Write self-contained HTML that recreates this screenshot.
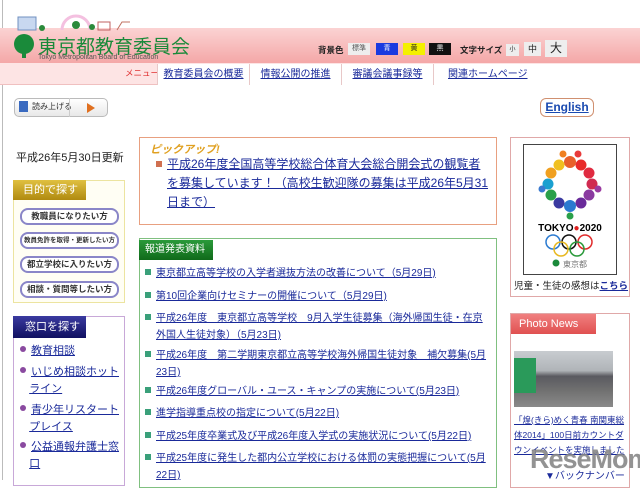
<!DOCTYPE html>
<html><head><meta charset="utf-8"><style>
*{margin:0;padding:0;box-sizing:border-box}
body{width:640px;height:480px;overflow:hidden;background:#fff;font-family:"Liberation Sans","Noto Sans CJK JP",sans-serif;position:relative;color:#222}
.a{position:absolute}
a{color:#1a2a9a;text-decoration:underline}
.band{left:0;top:28px;width:640px;height:36px;background:linear-gradient(#fbd3d3,#f4a6a6)}
.nav{left:0;top:63px;width:640px;height:22px;background:#fde4e4;border-bottom:1px solid #f0c0c0}
.tab{top:64px;height:21px;background:#fff;border-left:1px solid #e8c8c8;font-size:10px;text-align:center;line-height:21px}
.btn{background:#fff;border:2px solid #8a86c8;border-radius:8px;font-size:8.5px;text-align:center;height:17px;line-height:13px;font-weight:bold;color:#333;left:20px;width:99px}
.item{font-size:10px;left:145px;width:345px;line-height:17px;padding-left:11px;text-indent:-11px}
.item i{display:inline-block;width:6px;height:6px;background:#3aa07a;margin-right:5px;vertical-align:1px;text-indent:0}
.side{font-size:11px;left:20px;line-height:17px;width:100px}
.side i{display:inline-block;width:6px;height:6px;border-radius:3px;background:#8a4aa0;margin-right:5px;vertical-align:2px}
</style></head><body>
<div class="a" style="left:2px;top:0;width:1px;height:480px;background:#bbb"></div>
<div class="a band"></div>
<svg class="a" style="left:12px;top:10px" width="150" height="22"><rect x="6" y="7" width="18" height="13" fill="#c8d8f0" stroke="#7090c0"/><circle cx="30" cy="18" r="3" fill="#2a8a3a"/><path d="M50 20 A14 14 0 0 1 78 20" fill="none" stroke="#f4c0e0" stroke-width="3"/><circle cx="64" cy="15" r="4" fill="#2a8a3a"/><circle cx="80" cy="17" r="3" fill="#2a8a3a"/><rect x="86" y="12" width="12" height="8" fill="none" stroke="#c06060"/><path d="M105 20 L110 12 L118 12" fill="none" stroke="#c07060"/></svg>
<svg class="a" style="left:12px;top:34px" width="24" height="24"><circle cx="12" cy="10" r="10" fill="#1a8a3a"/><rect x="10" y="14" width="4" height="10" fill="#1a8a3a"/></svg>
<div class="a" style="left:38px;top:32px;font-size:19px;color:#1a8a3a;white-space:nowrap">東京都教育委員会</div>
<div class="a" style="left:38px;top:54px;font-size:7px;color:#555;white-space:nowrap">Tokyo Metropolitan Board of Education</div>
<div class="a" style="left:318px;top:44px;font-size:8.5px;font-weight:bold;white-space:nowrap">背景色</div>
<div class="a" style="left:348px;top:43px;width:22px;height:12px;background:#eee;font-size:7px;text-align:center;line-height:12px;color:#555">標準</div>
<div class="a" style="left:376px;top:43px;width:22px;height:12px;background:#1a3ae0;font-size:7px;text-align:center;line-height:12px;color:#fff">青</div>
<div class="a" style="left:403px;top:43px;width:22px;height:12px;background:#f4f000;font-size:7px;text-align:center;line-height:12px">黄</div>
<div class="a" style="left:429px;top:43px;width:22px;height:12px;background:#111;font-size:7px;text-align:center;line-height:12px;color:#fff">黒</div>
<div class="a" style="left:460px;top:44px;font-size:8.5px;font-weight:bold;white-space:nowrap">文字サイズ</div>
<div class="a" style="left:506px;top:44px;width:13px;height:12px;background:#eee;font-size:6px;text-align:center;line-height:12px">小</div>
<div class="a" style="left:524px;top:42px;width:17px;height:14px;background:#eee;font-size:9px;text-align:center;line-height:14px">中</div>
<div class="a" style="left:545px;top:40px;width:22px;height:17px;background:#eee;font-size:12px;text-align:center;line-height:17px">大</div>
<div class="a nav"></div>
<div class="a" style="left:125px;top:67px;font-size:8.5px;color:#e03030">メニュー</div>
<div class="a tab" style="left:157px;width:92px"><a>教育委員会の概要</a></div>
<div class="a tab" style="left:249px;width:92px"><a>情報公開の推進</a></div>
<div class="a tab" style="left:341px;width:92px"><a>審議会議事録等</a></div>
<div class="a tab" style="left:433px;width:207px;text-align:left;padding-left:14px"><a>関連ホームページ</a></div>
<div class="a" style="left:14px;top:98px;width:94px;height:19px;border:1px solid #bbb;border-radius:5px;background:linear-gradient(#fff,#e8e8e8)"></div>
<div class="a" style="left:19px;top:101px;width:9px;height:11px;background:#3a6ac0"></div>
<div class="a" style="left:32px;top:101px;font-size:8px;color:#333">読み上げる</div>
<div class="a" style="left:69px;top:98px;width:1px;height:19px;background:#ccc"></div>
<div class="a" style="left:87px;top:103px;border-left:8px solid #e07020;border-top:5px solid transparent;border-bottom:5px solid transparent"></div>
<div class="a" style="left:540px;top:98px;width:54px;height:19px;border:1.5px solid #d09070;border-radius:6px;font-size:12px;font-weight:bold;text-align:center;line-height:16px"><a style="color:#1a4ab0">English</a></div>
<div class="a" style="left:16px;top:149px;font-size:11px">平成26年5月30日更新</div>
<div class="a" style="left:13px;top:180px;width:112px;height:123px;border:1px solid #ece4a0;background:#fffef4"></div>
<div class="a" style="left:13px;top:180px;width:73px;height:20px;background:linear-gradient(#e0c040,#b08a10);color:#fff;font-size:11px;line-height:20px;padding-left:10px">目的で探す</div>
<div class="a btn" style="top:208px">教職員になりたい方</div>
<div class="a btn" style="top:232px;font-size:6.5px">教員免許を取得・更新したい方</div>
<div class="a btn" style="top:256px">都立学校に入りたい方</div>
<div class="a btn" style="top:281px">相談・質問等したい方</div>
<div class="a" style="left:13px;top:316px;width:112px;height:170px;border:1px solid #c8a8d8"></div>
<div class="a" style="left:13px;top:316px;width:73px;height:22px;background:linear-gradient(#3a3aa0,#101060);color:#fff;font-size:11px;line-height:22px;padding-left:12px">窓口を探す</div>
<div class="a side" style="top:343px"><i></i><a>教育相談</a></div>
<div class="a side" style="top:364px"><i></i><a>いじめ相談ホット</a><br>&nbsp;&nbsp;&nbsp;<a>ライン</a></div>
<div class="a side" style="top:402px"><i></i><a>青少年リスタート</a><br>&nbsp;&nbsp;&nbsp;<a>プレイス</a></div>
<div class="a side" style="top:439px"><i></i><a>公益通報弁護士窓</a><br>&nbsp;&nbsp;&nbsp;<a>口</a></div>
<div class="a" style="left:139px;top:137px;width:358px;height:88px;border:1px solid #e8a080"></div>
<div class="a" style="left:150px;top:141px;font-size:11px;font-weight:bold;font-style:italic;color:#e0a020">ピックアップ!</div>
<div class="a" style="left:156px;top:161px;width:6px;height:6px;background:#d07050"></div>
<div class="a" style="left:167px;top:155px;width:325px;font-size:12px;line-height:19px"><a>平成26年度全国高等学校総合体育大会総合開会式の観覧者を募集しています！（高校生歓迎隊の募集は平成26年5月31日まで）</a></div>
<div class="a" style="left:139px;top:238px;width:358px;height:250px;border:1px solid #80c080"></div>
<div class="a" style="left:139px;top:240px;width:74px;height:20px;background:linear-gradient(#2a9a3a,#106a1a);color:#fff;font-size:10px;line-height:20px;padding-left:6px">報道発表資料</div>
<div class="a item" style="top:265px"><i></i><a>東京都立高等学校の入学者選抜方法の改善について（5月29日)</a></div>
<div class="a item" style="top:288px"><i></i><a>第10回企業向けセミナーの開催について（5月29日)</a></div>
<div class="a item" style="top:310px"><i></i><a>平成26年度　東京都立高等学校　9月入学生徒募集（海外帰国生徒・在京外国人生徒対象）（5月23日)</a></div>
<div class="a item" style="top:347px"><i></i><a>平成26年度　第二学期東京都立高等学校海外帰国生徒対象　補欠募集(5月23日)</a></div>
<div class="a item" style="top:383px"><i></i><a>平成26年度グローバル・ユース・キャンプの実施について(5月23日)</a></div>
<div class="a item" style="top:405px"><i></i><a>進学指導重点校の指定について(5月22日)</a></div>
<div class="a item" style="top:428px"><i></i><a>平成25年度卒業式及び平成26年度入学式の実施状況について(5月22日)</a></div>
<div class="a item" style="top:450px"><i></i><a>平成25年度に発生した都内公立学校における体罰の実態把握について(5月22日)</a></div>
<div class="a" style="left:510px;top:137px;width:120px;height:160px;border:1px solid #e0a8a8"></div>
<div class="a" style="left:523px;top:144px;width:94px;height:131px;border:1px solid #444"></div>
<svg class="a" style="left:523px;top:144px" width="94" height="131">
<g>
<circle cx="47" cy="18" r="6" fill="#e8602a"/><circle cx="58" cy="21" r="5.5" fill="#e82a2a"/><circle cx="66" cy="29" r="5.5" fill="#e02a40"/><circle cx="69" cy="40" r="5.5" fill="#d02a50"/><circle cx="66" cy="51" r="5.5" fill="#8a3aa0"/><circle cx="58" cy="59" r="5.5" fill="#6a2a9a"/><circle cx="47" cy="62" r="6" fill="#2a7ad0"/><circle cx="36" cy="59" r="5.5" fill="#3a3aa0"/><circle cx="28" cy="51" r="5.5" fill="#2aa04a"/><circle cx="25" cy="40" r="5.5" fill="#1aa0d0"/><circle cx="28" cy="29" r="5.5" fill="#f0a020"/><circle cx="36" cy="21" r="5.5" fill="#f0c020"/>
<circle cx="55" cy="10" r="3.5" fill="#e83a3a"/><circle cx="40" cy="10" r="3.5" fill="#f08020"/><circle cx="75" cy="45" r="3.5" fill="#9a3aa0"/><circle cx="19" cy="45" r="3.5" fill="#3a7ad0"/><circle cx="47" cy="72" r="3.5" fill="#2aa04a"/>
</g>
<text x="47" y="87" font-size="10" font-weight="bold" text-anchor="middle" font-family="Liberation Sans">TOKYO<tspan fill="#e02020">●</tspan>2020</text>
<g fill="none" stroke-width="1.5"><circle cx="30" cy="98" r="7" stroke="#2a7ad0"/><circle cx="46" cy="98" r="7" stroke="#111"/><circle cx="62" cy="98" r="7" stroke="#e02a2a"/><circle cx="38" cy="105" r="7" stroke="#e8b820"/><circle cx="54" cy="105" r="7" stroke="#2a9a3a"/></g>
<circle cx="33" cy="119" r="3.5" fill="#1a8a3a"/><text x="40" y="123" font-size="8" fill="#777" font-family="Noto Sans CJK JP">東京都</text>
</svg>
<div class="a" style="left:514px;top:278px;font-size:9.5px;white-space:nowrap">児童・生徒の感想は<a style="font-weight:bold">こちら</a></div>
<div class="a" style="left:510px;top:313px;width:120px;height:175px;border:1px solid #e0a8a8"></div>
<div class="a" style="left:511px;top:314px;width:85px;height:20px;background:linear-gradient(#f08080,#e05050);color:#fff;font-size:11px;line-height:20px;padding-left:8px">Photo News</div>
<div class="a" style="left:514px;top:351px;width:99px;height:56px;background:linear-gradient(#c8ccd0 0%,#b0b4b8 35%,#5a5a60 45%,#707070 70%,#8a8a8a 100%)"></div>
<div class="a" style="left:514px;top:358px;width:22px;height:35px;background:#2a9a5a"></div>
<div class="a" style="left:514px;top:413px;width:112px;font-size:8.5px;line-height:15px"><a>「煌(きら)めく青春 南関東総体2014」100日前カウントダウンイベントを実施しました</a></div>
<div class="a" style="left:530px;top:443px;font-size:27px;font-weight:bold;color:#888;letter-spacing:-1px;opacity:.9;line-height:32px;white-space:nowrap">ReseMom</div>
<div class="a" style="left:545px;top:467px;font-size:10px;color:#1a2a9a">▼バックナンバー</div>
</body></html>
